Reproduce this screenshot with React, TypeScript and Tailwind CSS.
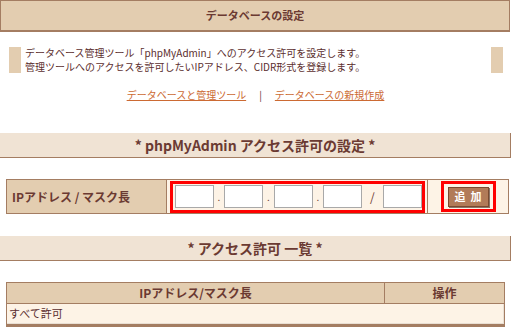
const font = { fontFamily: '"Noto Sans CJK JP", "Liberation Sans", sans-serif' };

function IpBox() {
  return <input type="text" className="h-[23px] w-[39px] border border-[#a9a9a9] bg-white outline-none" />;
}

function SectionTitle({ children }: { children: React.ReactNode }) {
  return (
    <div className="flex h-[25px] items-center justify-center border-r border-b border-[#a47d62] bg-[#f0e3d4] text-[14px] font-bold text-[#6b3a32]">
      {children}
    </div>
  );
}

export default function App() {
  return (
    <div className="w-[511px] bg-white pb-[4px] text-[#5b2e2e]" style={font}>
      {/* Top header */}
      <div className="flex h-[32px] w-[510px] items-center justify-center border border-b-2 border-[#a47d62] bg-[#e3cdb0] text-[11px] font-bold text-[#6b3a32]">
        データベースの設定
      </div>

      {/* Description */}
      <div className="mt-[15px] flex h-[26px] items-start pl-[9px] pr-[8px]">
        <div className="h-[26px] w-[12px] bg-[#e3cdb0]" />
        <div className="-mt-[1px] flex-1 pl-[4px] text-[10px] leading-[14px]">
          <div>データベース管理ツール「phpMyAdmin」へのアクセス許可を設定します。</div>
          <div>管理ツールへのアクセスを許可したいIPアドレス、CIDR形式を登録します。</div>
        </div>
        <div className="h-[26px] w-[12px] bg-[#e3cdb0]" />
      </div>

      {/* Links */}
      <div className="mt-[15px] flex h-[14px] items-center justify-center gap-[13px] text-[10px] leading-[14px]">
        <a className="text-[#cc6a33] underline">データベースと管理ツール</a>
        <span className="text-[#6b3a32]">|</span>
        <a className="text-[#cc6a33] underline">データベースの新規作成</a>
      </div>

      {/* phpMyAdmin access */}
      <div className="mt-[31px]">
        <SectionTitle>* phpMyAdmin アクセス許可の設定 *</SectionTitle>
      </div>

      <div className="ml-[6px] mt-[21px] flex h-[35px] w-[503px] gap-px border border-[#a47d62] bg-[#a47d62]">
        <div className="flex w-[159px] items-center bg-[#e3cdb0] pl-[5px] text-[12px] font-bold text-[#6b3a32]">
          IPアドレス / マスク長
        </div>
        <div className="flex w-[260px] items-center justify-center bg-[#fdf3e6]">
          <div className="flex h-[32px] w-[255px] items-center gap-[2px] border-[3px] border-[#ff0000] pl-[2px]">
            <IpBox />
            <span className="w-[8px] text-center text-[10px] text-[#6b3a32]">.</span>
            <IpBox />
            <span className="w-[8px] text-center text-[10px] text-[#6b3a32]">.</span>
            <IpBox />
            <span className="w-[8px] text-center text-[10px] text-[#6b3a32]">.</span>
            <IpBox />
            <span className="w-[20px] text-center text-[12px] text-[#6b3a32]">/</span>
            <IpBox />
          </div>
        </div>
        <div className="flex flex-1 items-center justify-center bg-[#fdf3e6]">
          <div className="flex h-[31px] w-[55px] items-center justify-center border-[3px] border-[#ff0000]">
            <button className="flex h-[20px] w-[41px] items-center justify-center border border-[#7a4a30] bg-[#b27b58] pl-[5px] text-[11px] font-bold tracking-[5px] text-white shadow-[1px_1px_0_#8c7466]">
              追加
            </button>
          </div>
        </div>
      </div>

      {/* Access list */}
      <div className="mt-[22px]">
        <SectionTitle>* アクセス許可 一覧 *</SectionTitle>
      </div>

      <div className="ml-[6px] mt-[21px] w-[499px] border border-b-[3px] border-[#a47d62]">
        <div className="flex h-[21px] border-b border-[#a47d62] bg-[#e3cdb0] text-[12px] font-bold text-[#6b3a32]">
          <div className="flex w-[378px] items-center justify-center border-r border-[#a47d62]">
            IPアドレス/マスク長
          </div>
          <div className="flex flex-1 items-center justify-center">操作</div>
        </div>
        <div className="flex h-[20px] items-center border-r border-b border-[#e9dfd3] bg-[#fdf3e6] pl-[2px] text-[11px]">
          すべて許可
        </div>
      </div>
    </div>
  );
}
